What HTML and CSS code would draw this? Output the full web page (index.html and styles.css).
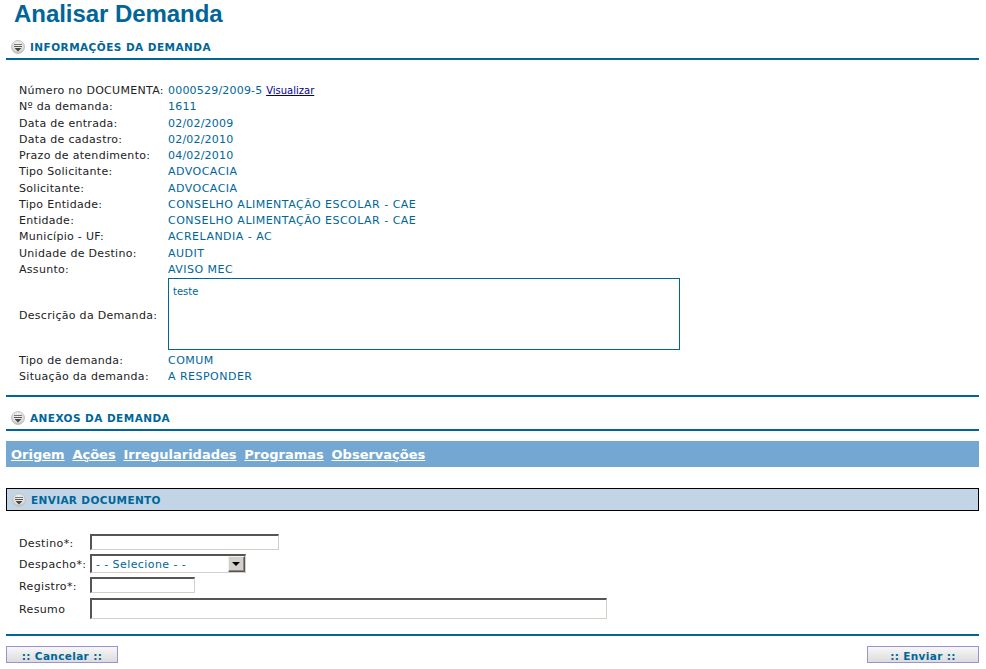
FILE: index.html
```html
<!DOCTYPE html>
<html lang="pt">
<head>
<meta charset="utf-8">
<title>Analisar Demanda</title>
<link rel="stylesheet" href="styles.css">
</head>
<body>
<svg class="defs" width="0" height="0" aria-hidden="true">
  <defs>
    <radialGradient id="disc" cx="50%" cy="40%" r="60%">
      <stop offset="0" stop-color="#f6f6f4"/>
      <stop offset="0.65" stop-color="#e2e2e0"/>
      <stop offset="1" stop-color="#b4b4b0"/>
    </radialGradient>
    <symbol id="collapse" viewBox="0 0 14 14">
      <circle cx="7" cy="7" r="6.5" fill="url(#disc)" stroke="#c4c4c0"/>
      <rect x="3" y="4" width="8" height="1" fill="#777"/>
      <rect x="3" y="6" width="8" height="1" fill="#555"/>
      <path d="M3.5 8h7L7 11.5z" fill="#444"/>
    </symbol>
  </defs>
</svg>
<h1 class="title">Analisar Demanda</h1>
<h2 class="section first"><svg class="icon"><use href="#collapse"/></svg>INFORMAÇÕES DA DEMANDA</h2>
<dl class="info">
  <dt>Número no DOCUMENTA:</dt><dd class="num">0000529/2009-5 <a class="view" href="#">Visualizar</a></dd>
  <dt>Nº da demanda:</dt><dd class="num">1611</dd>
  <dt>Data de entrada:</dt><dd class="num">02/02/2009</dd>
  <dt>Data de cadastro:</dt><dd class="num">02/02/2010</dd>
  <dt>Prazo de atendimento:</dt><dd class="num">04/02/2010</dd>
  <dt>Tipo Solicitante:</dt><dd>ADVOCACIA</dd>
  <dt>Solicitante:</dt><dd>ADVOCACIA</dd>
  <dt>Tipo Entidade:</dt><dd>CONSELHO ALIMENTAÇÃO ESCOLAR - CAE</dd>
  <dt>Entidade:</dt><dd>CONSELHO ALIMENTAÇÃO ESCOLAR - CAE</dd>
  <dt>Município - UF:</dt><dd>ACRELANDIA - AC</dd>
  <dt>Unidade de Destino:</dt><dd>AUDIT</dd>
  <dt>Assunto:</dt><dd>AVISO MEC</dd>
  <dt>Descrição da Demanda:</dt><dd><div class="desc">teste</div></dd>
  <dt>Tipo de demanda:</dt><dd>COMUM</dd>
  <dt>Situação da demanda:</dt><dd>A RESPONDER</dd>
</dl>
<h2 class="section second"><svg class="icon"><use href="#collapse"/></svg>ANEXOS DA DEMANDA</h2>
<nav class="tabs">
  <a href="#">Origem</a><a href="#">Ações</a><a href="#">Irregularidades</a><a href="#">Programas</a><a href="#">Observações</a>
</nav>
<h2 class="boxed"><svg class="icon"><use href="#collapse"/></svg>ENVIAR DOCUMENTO</h2>
<form class="send">
  <label>Destino*:</label><div class="field"><span class="input destino"></span></div>
  <label>Despacho*:</label><div class="field"><span class="select"><span class="select-text">- - Selecione - -</span><span class="arrow"></span></span></div>
  <label>Registro*:</label><div class="field"><span class="input registro"></span></div>
  <label class="last-label">Resumo</label><div class="field last"><span class="input resumo"></span></div>
</form>
<footer class="actions">
  <button type="button" class="btn">:: Cancelar ::</button>
  <button type="button" class="btn">:: Enviar ::</button>
</footer>
</body>
</html>
```
FILE: styles.css
```css
* { box-sizing: border-box; }
html, body { margin: 0; padding: 0; background: #fff; }
body {
  width: 986px;
  height: 669px;
  overflow: hidden;
  padding: 0 7px 0 6px;
  font: 11px/14px "DejaVu Sans", sans-serif;
  color: #222;
}
.defs { position: absolute; }
.title {
  margin: 0;
  padding-left: 8px;
  height: 28px;
  font: bold 24px/28px "Liberation Sans", Arial, sans-serif;
  letter-spacing: -0.05px;
  color: #006699;
}
.section {
  display: flex;
  align-items: center;
  margin: 0;
  padding-left: 5px;
  border-bottom: 2px solid #006699;
  font: bold 10.5px/14px "DejaVu Sans", sans-serif;
  letter-spacing: 0.45px;
  color: #006699;
}
.section.first { height: 32px; padding-top: 8px; }
.section.second { height: 34px; padding-top: 10px; }
.icon { width: 14px; height: 14px; margin-right: 5px; flex: none; }
.info {
  display: grid;
  grid-template-columns: 149px 1fr;
  grid-auto-rows: minmax(16.25px, auto);
  align-items: center;
  margin: 0;
  padding: 23px 0 9px 13px;
  border-bottom: 2px solid #006699;
  font: 11px/14px "DejaVu Sans", sans-serif;
  letter-spacing: 0.3px;
}
.info dt, .info dd { margin: 0; white-space: nowrap; }
.info dd { color: #006699; letter-spacing: 0.48px; }
.info dd.num { letter-spacing: 0.2px; }
.view { color: #000099; font-size: 10px; letter-spacing: 0; }
.desc {
  width: 512px;
  height: 72px;
  margin: 0 0 3px;
  border: 1px solid #006699;
  padding: 6px 4px;
  font-size: 10px;
  letter-spacing: 0;
}
.tabs {
  display: flex;
  gap: 7.8px;
  align-items: center;
  height: 26px;
  margin-top: 10px;
  padding: 2px 0 0 5px;
  background: #74a7d1;
  font: bold 13px/16px "DejaVu Sans", sans-serif;
}
.tabs a { color: #fff; text-decoration: underline; }
.boxed {
  display: flex;
  align-items: center;
  height: 23px;
  margin: 21px 0 0;
  padding: 2px 0 0 5px;
  border: 1px solid #000;
  background: #c1d5e6;
  font: bold 10.5px/14px "DejaVu Sans", sans-serif;
  letter-spacing: 0.35px;
  color: #006699;
}
.send {
  display: grid;
  grid-template-columns: 71px 1fr;
  grid-template-rows: 22px 21px 22px 23px;
  align-items: center;
  padding: 21px 0 14px 13px;
  border-bottom: 2px solid #006699;
  font: 11px/14px "DejaVu Sans", sans-serif;
  letter-spacing: 0.37px;
}
.send label { padding-top: 2px; }
.send .last-label { padding-top: 4px; }
.field { display: flex; align-items: center; padding-bottom: 2px; }
.field.last { padding-bottom: 0; }
.input {
  display: block;
  border: 1px solid #d4d0c8;
  border-top: 2px solid #555;
  border-left: 2px solid #555;
  background: #fff;
}
.destino { width: 189px; height: 16px; }
.registro { width: 105px; height: 16px; }
.resumo { width: 517px; height: 21px; }
.select {
  display: flex;
  align-items: center;
  width: 156px;
  height: 19px;
  border: 1px solid #d4d0c8;
  border-top: 2px solid #555;
  border-left: 2px solid #555;
  padding-left: 4px;
  color: #006699;
}
.select-text { flex: 1; padding-top: 2px; letter-spacing: 0.42px; }
.arrow {
  position: relative;
  width: 17px;
  height: 16px;
  background: #d4d0c8;
  border: 1px solid;
  border-color: #f2f2f2 #555 #555 #f2f2f2;
  box-shadow: inset -1px -1px 0 #888;
}
.arrow::after {
  content: "";
  position: absolute;
  left: 3px;
  top: 5px;
  border: 4px solid transparent;
  border-bottom: 0;
  border-top-color: #000;
}
.actions {
  display: flex;
  justify-content: space-between;
  margin-top: 10px;
}
.btn {
  width: 112px;
  height: 17px;
  padding: 2px 0 0;
  border: 1px solid #9b92cf;
  background: linear-gradient(#f7f7f7, #dcdcdc);
  font: bold 10.5px/14px "DejaVu Sans", sans-serif;
  letter-spacing: 0.35px;
  color: #006699;
}
```
